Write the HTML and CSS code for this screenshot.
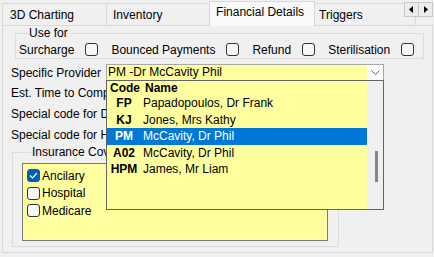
FILE: index.html
```html
<!DOCTYPE html>
<html lang="en">
<head>
    <meta charset="UTF-8">
    <title>Financial Details</title>
    <link rel="stylesheet" href="styles.css">
</head>
<body>
    <div class="tabs">
        <div class="tab first">3D Charting</div>
        <div class="tab">Inventory</div>
        <div class="tab active">Financial Details</div>
        <div class="tab">Triggers</div>
        <div class="tab rest"></div>
        <div class="tab-scroll">
            <span class="scroll-btn">
                <svg width="5" height="7" viewBox="0 0 5 7"><polygon points="4,0 4,7 0,3.5" fill="#000"/></svg>
            </span>
            <span class="scroll-btn">
                <svg width="5" height="7" viewBox="0 0 5 7"><polygon points="1,0 1,7 5,3.5" fill="#000"/></svg>
            </span>
        </div>
    </div>

    <div class="page">
        <fieldset class="group use-for">
            <legend>Use for</legend>
            <div class="check-row">
                <span class="opt">Surcharge</span><span class="box"></span>
                <span class="opt">Bounced Payments</span><span class="box"></span>
                <span class="opt">Refund</span><span class="box"></span>
                <span class="opt">Sterilisation</span><span class="box"></span>
            </div>
        </fieldset>

        <div class="field-row first-row">
            <span class="field-label">Specific Provider</span>
            <div class="combo">
                <span class="combo-text">PM -Dr McCavity Phil</span>
                <span class="combo-btn">
                    <svg width="9" height="5" viewBox="0 0 9 5"><polyline points="0.5,0.5 4.5,4.5 8.5,0.5" fill="none" stroke="#606060" stroke-width="1"/></svg>
                </span>
                <div class="dropdown">
                    <div class="list">
                        <div class="list-row head"><span class="code">Code</span><span class="name">Name</span></div>
                        <div class="list-row"><span class="code">FP</span><span class="name">Papadopoulos, Dr Frank</span></div>
                        <div class="list-row"><span class="code">KJ</span><span class="name">Jones, Mrs Kathy</span></div>
                        <div class="list-row selected"><span class="code">PM</span><span class="name">McCavity, Dr Phil</span></div>
                        <div class="list-row"><span class="code">A02</span><span class="name">McCavity, Dr Phil</span></div>
                        <div class="list-row"><span class="code">HPM</span><span class="name">James, Mr Liam</span></div>
                    </div>
                    <div class="scrollbar"><div class="thumb"></div></div>
                </div>
            </div>
        </div>
        <div class="field-row"><span class="field-label">Est. Time to Complete</span></div>
        <div class="field-row"><span class="field-label">Special code for Dental</span></div>
        <div class="field-row"><span class="field-label">Special code for Hospital</span></div>

        <fieldset class="group insurance">
            <legend>Insurance Cover</legend>
            <div class="check-list">
                <div class="check-item"><span class="box checked">
                    <svg width="9" height="7" viewBox="0 0 9 7"><polyline points="1,3.5 3.5,6 8,1" fill="none" stroke="#fff" stroke-width="1.2"/></svg>
                </span>Ancilary</div>
                <div class="check-item"><span class="box"></span>Hospital</div>
                <div class="check-item"><span class="box"></span>Medicare</div>
            </div>
        </fieldset>
    </div>
</body>
</html>
```

FILE: styles.css
```css
body {
    margin: 0;
    width: 434px;
    height: 257px;
    overflow: hidden;
    background-color: #f0f0f0;
    font-family: "Liberation Sans", Arial, sans-serif;
    font-size: 12px;
    color: #000;
}
.tabs {
    position: relative;
    display: flex;
    align-items: flex-end;
    height: 25px;
    padding-left: 2px;
}
.tab {
    box-sizing: border-box;
    height: 22px;
    padding: 4px 0 0 6px;
    line-height: 15px;
    border: 1px solid #d9d9d9;
    border-bottom: none;
    margin-right: -1px;
    background-color: #f0f0f0;
    white-space: nowrap;
}
.tab.first {
    width: 106px;
    padding-left: 7px;
}
.tab:nth-child(2) {
    width: 105px;
}
.tab.active {
    position: relative;
    z-index: 2;
    width: 107px;
    height: 25px;
    margin-bottom: -1px;
    padding-top: 3px;
    background-color: #f9f9f9;
}
.tab:nth-child(4) {
    width: 103px;
    padding-left: 4px;
}
.tab.rest {
    width: 20px;
    height: 9px;
}
.tab-scroll {
    position: absolute;
    top: 2px;
    right: 1px;
    display: flex;
    z-index: 3;
}
.scroll-btn {
    box-sizing: border-box;
    width: 15px;
    height: 15px;
    display: flex;
    align-items: center;
    justify-content: center;
    background-color: #ececec;
    border: 1px solid #c8c8c8;
    margin-left: -1px;
}
.page {
    position: relative;
    box-sizing: border-box;
    width: 431px;
    height: 228px;
    margin-left: 2px;
    border: 1px solid #d9d9d9;
    background-color: #f0f0f0;
}
.group {
    box-sizing: border-box;
    margin: 0;
    border: 1px solid #dcdcdc;
    min-width: 0;
}
.group legend {
    padding: 0 1px;
    line-height: 15px;
}
.use-for {
    width: 409px;
    margin-left: 12px;
    padding: 0 0 0 3px;
}
.use-for legend {
    margin-left: 9px;
}
.check-row {
    display: flex;
    align-items: center;
    height: 17px;
}
.check-row .box {
    margin-left: 11px;
}
.check-row .box + .opt {
    margin-left: 13px;
}
.box {
    box-sizing: border-box;
    display: inline-flex;
    align-items: center;
    justify-content: center;
    width: 13px;
    height: 13px;
    border: 1px solid #333;
    border-radius: 3px;
    background-color: #f7f7f7;
    flex: 0 0 13px;
}
.box.checked {
    background-color: #005fb8;
    border-color: #005fb8;
}
.field-row {
    display: flex;
    align-items: center;
    height: 21px;
    white-space: nowrap;
}
.first-row {
    height: 19px;
    margin-top: 4px;
}
.field-label {
    flex: 0 0 95px;
    padding-left: 8px;
    overflow: hidden;
}
.combo {
    position: relative;
    box-sizing: border-box;
    display: flex;
    width: 278px;
    height: 17px;
    border: 1px solid #a8a8a8;
    background-color: #ffffa0;
}
.combo-text {
    flex: 1;
    padding-left: 1px;
    line-height: 15px;
}
.combo-btn {
    width: 16px;
    display: flex;
    align-items: center;
    justify-content: center;
    background-color: #fff;
}
.dropdown {
    position: absolute;
    z-index: 10;
    top: 15px;
    left: -1px;
    box-sizing: border-box;
    width: 278px;
    height: 130px;
    display: flex;
    border: 1px solid #646464;
    background-color: #ffffa0;
}
.list {
    width: 260px;
}
.list-row {
    display: flex;
    align-items: center;
    height: 16.5px;
    line-height: 14px;
}
.list-row.head {
    height: 14px;
    font-weight: bold;
}
.list-row .code {
    width: 34px;
    text-align: center;
    font-weight: bold;
}
.list-row.head .code {
    width: 36px;
    text-align: left;
    padding-left: 3px;
    box-sizing: border-box;
}
.list-row .name {
    padding-left: 2px;
}
.list-row.selected {
    background-color: #0078d7;
    color: #fff;
}
.scrollbar {
    width: 16px;
    background-color: #f0f0f0;
}
.thumb {
    width: 3px;
    height: 31px;
    margin: 70px 0 0 8px;
    background-color: #868686;
}
.insurance {
    width: 327px;
    margin-left: 9px;
    padding: 0 10px 5px 9px;
}
.insurance legend {
    margin-left: 9px;
    max-width: 84px;
    overflow: hidden;
    white-space: nowrap;
}
.check-list {
    box-sizing: border-box;
    height: 78px;
    margin-top: 3px;
    padding: 3px 0 0 4px;
    border: 1px solid #7a7a7a;
    background-color: #ffffa0;
}
.check-item {
    display: flex;
    align-items: center;
    height: 17.5px;
}
.check-item .box {
    margin-right: 2px;
}
```
